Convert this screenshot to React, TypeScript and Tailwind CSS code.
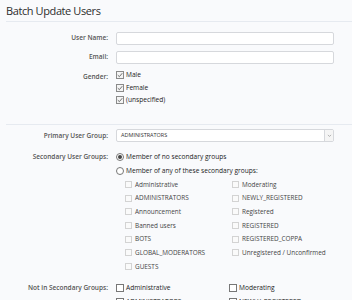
import React from "react";

const font = { fontFamily: '"Open Sans", "Noto Sans", sans-serif' };

function CheckMark() {
  return (
    <svg viewBox="0 0 8 8" className="w-[6px] h-[6px]">
      <path d="M1 4.2 L3.2 6.2 L7 1.6" fill="none" stroke="#555" strokeWidth="1.1" />
    </svg>
  );
}

function Checked({ label }: { label: string }) {
  return (
    <div className="flex items-center h-[12.5px] gap-[2px]">
      <span className="w-[8px] h-[8px] border border-[#8a8a8a] bg-[#f4f4f4] flex items-center justify-center">
        <CheckMark />
      </span>
      <span className="text-[6.6px] text-[#222]">{label}</span>
    </div>
  );
}

function GroupBox({ label }: { label: string }) {
  return (
    <div className="flex items-center h-[13.7px] gap-[3px]">
      <span className="w-[7px] h-[7px] border border-[#d3d3d3] bg-[#fafafa]" />
      <span className="text-[6.4px] text-[#444]">{label}</span>
    </div>
  );
}

function Label({ children }: { children: React.ReactNode }) {
  return (
    <div className="w-[110px] shrink-0 pr-[2px] text-right text-[6.5px] font-semibold text-[#555]">
      {children}
    </div>
  );
}

export default function App() {
  const left = ["Administrative", "ADMINISTRATORS", "Announcement", "Banned users", "BOTS", "GLOBAL_MODERATORS", "GUESTS"];
  const right = ["Moderating", "NEWLY_REGISTERED", "Registered", "REGISTERED", "REGISTERED_COPPA", "Unregistered / Unconfirmed"];
  return (
    <div className="w-[352px] h-[300px] overflow-hidden bg-[#f9fafc]" style={font}>
      <div className="px-[6px] pt-[2px] h-[21px] text-[11px] leading-[18px] tracking-[-0.4px] text-[#2d2d2d]">Batch Update Users</div>
      <div className="ml-[6px] border-t border-[#e6eaf0]" />

      <div className="pt-[9px]">
        <div className="flex items-center h-[14px]">
          <Label>User Name:</Label>
          <div className="ml-[6px] w-[218px] h-[13px] border border-[#d6d8dc] rounded-[2px] bg-white" />
        </div>
        <div className="flex items-center h-[14px] mt-[5px]">
          <Label>Email:</Label>
          <div className="ml-[6px] w-[218px] h-[13px] border border-[#d6d8dc] rounded-[2px] bg-white" />
        </div>
        <div className="flex mt-[5px]">
          <div className="pt-[3px]"><Label>Gender:</Label></div>
          <div className="ml-[6px]">
            <Checked label="Male" />
            <Checked label="Female" />
            <Checked label="(unspecified)" />
          </div>
        </div>
      </div>

      <div className="ml-[6px] mt-[17px] border-t border-[#e6eaf0]" />

      <div className="pt-[4px]">
        <div className="flex items-center h-[14px]">
          <Label>Primary User Group:</Label>
          <div className="ml-[6px] w-[218px] h-[13px] border border-[#d6d8dc] rounded-[2px] bg-white flex items-center">
            <span className="flex-1 pl-[4px] text-[5.5px] text-[#333]">ADMINISTRATORS</span>
            <span className="w-[9px] h-[11px] border-l border-[#d6d8dc] flex items-center justify-center bg-[#f5f5f5]">
              <svg viewBox="0 0 8 8" className="w-[5px] h-[5px]"><path d="M1.5 3 L4 5.5 L6.5 3" fill="none" stroke="#888" strokeWidth="1" /></svg>
            </span>
          </div>
        </div>

        <div className="flex mt-[7px]">
          <div className="h-[14px] flex items-center"><Label>Secondary User Groups:</Label></div>
          <div className="ml-[6px]">
            <div className="flex items-center h-[14px] gap-[2px]">
              <span className="w-[8px] h-[8px] rounded-full border border-[#777] bg-white flex items-center justify-center">
                <span className="w-[4px] h-[4px] rounded-full bg-[#444]" />
              </span>
              <span className="text-[6.6px] text-[#222]">Member of no secondary groups</span>
            </div>
            <div className="flex items-center h-[14px] gap-[2px]">
              <span className="w-[8px] h-[8px] rounded-full border border-[#777] bg-white" />
              <span className="text-[6.6px] text-[#222]">Member of any of these secondary groups:</span>
            </div>
            <div className="flex pl-[9px]">
              <div className="w-[107px]">
                {left.map((l) => <GroupBox key={l} label={l} />)}
              </div>
              <div>
                {right.map((l) => <GroupBox key={l} label={l} />)}
              </div>
            </div>
          </div>
        </div>

        <div className="flex mt-[8px]">
          <div className="h-[14px] flex items-center"><Label>Not in Secondary Groups:</Label></div>
          <div className="ml-[6px] flex">
            <div className="w-[113px]">
              {["Administrative", "ADMINISTRATORS"].map((l) => (
                <div key={l} className="flex items-center h-[13.7px] gap-[2px]">
                  <span className="w-[8px] h-[8px] border border-[#777] bg-white" />
                  <span className="text-[6.6px] text-[#222]">{l}</span>
                </div>
              ))}
            </div>
            <div>
              {["Moderating", "NEWLY_REGISTERED"].map((l) => (
                <div key={l} className="flex items-center h-[13.7px] gap-[2px]">
                  <span className="w-[8px] h-[8px] border border-[#777] bg-white" />
                  <span className="text-[6.6px] text-[#222]">{l}</span>
                </div>
              ))}
            </div>
          </div>
        </div>
      </div>
    </div>
  );
}
